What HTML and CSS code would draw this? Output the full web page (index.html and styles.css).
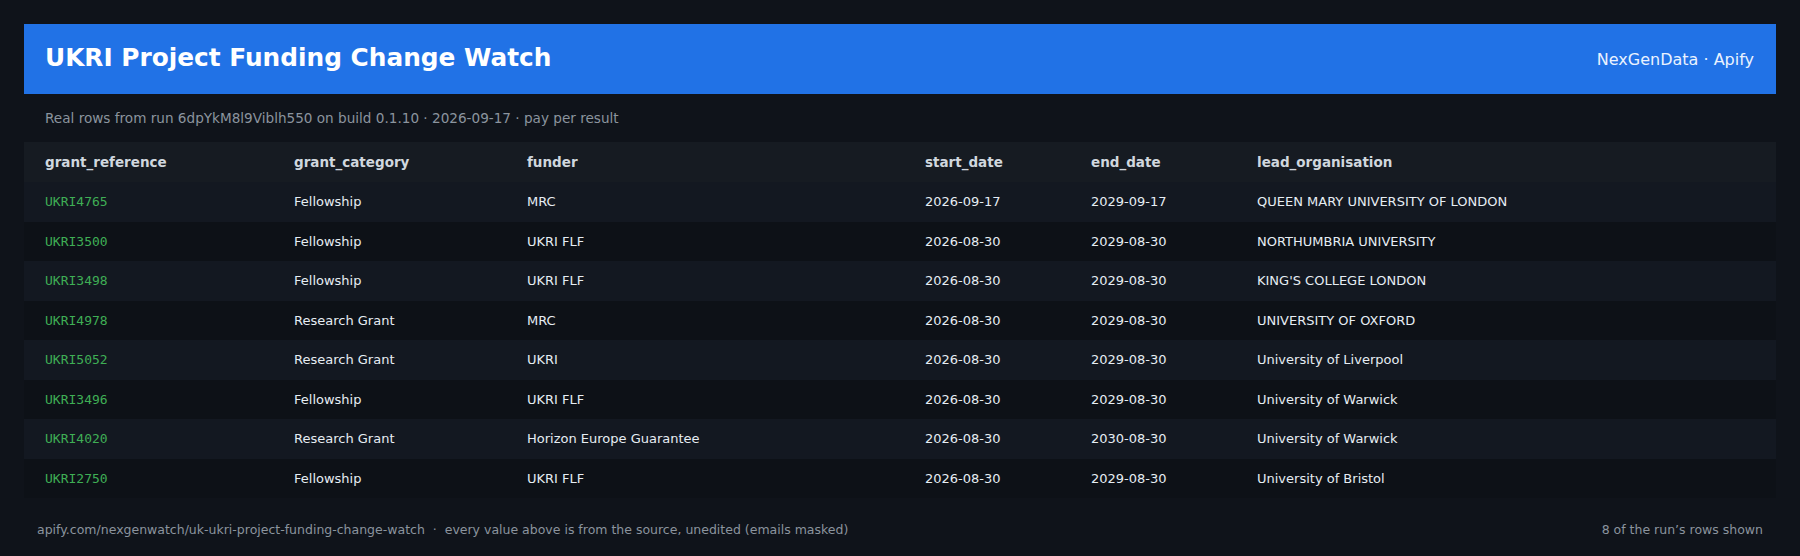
FILE: index.html
```html
<!DOCTYPE html>
<html lang="en">
<head>
<meta charset="utf-8">
<title>UKRI Project Funding Change Watch</title>
<link rel="stylesheet" href="styles.css">
</head>
<body>
<div class="page">
  <header class="banner">
    <h1 class="title">UKRI Project Funding Change Watch</h1>
    <div class="brand">NexGenData · Apify</div>
  </header>
  <p class="subtitle">Real rows from run 6dpYkM8l9Viblh550 on build 0.1.10 · 2026-09-17 · pay per result</p>
  <table class="grid">
    <colgroup>
      <col class="c1"><col class="c2"><col class="c3"><col class="c4"><col class="c5"><col class="c6">
    </colgroup>
    <thead>
      <tr><th>grant_reference</th><th>grant_category</th><th>funder</th><th>start_date</th><th>end_date</th><th>lead_organisation</th></tr>
    </thead>
    <tbody>
      <tr><td class="ref">UKRI4765</td><td>Fellowship</td><td>MRC</td><td>2026-09-17</td><td>2029-09-17</td><td>QUEEN MARY UNIVERSITY OF LONDON</td></tr>
      <tr><td class="ref">UKRI3500</td><td>Fellowship</td><td>UKRI FLF</td><td>2026-08-30</td><td>2029-08-30</td><td>NORTHUMBRIA UNIVERSITY</td></tr>
      <tr><td class="ref">UKRI3498</td><td>Fellowship</td><td>UKRI FLF</td><td>2026-08-30</td><td>2029-08-30</td><td>KING'S COLLEGE LONDON</td></tr>
      <tr><td class="ref">UKRI4978</td><td>Research Grant</td><td>MRC</td><td>2026-08-30</td><td>2029-08-30</td><td>UNIVERSITY OF OXFORD</td></tr>
      <tr><td class="ref">UKRI5052</td><td>Research Grant</td><td>UKRI</td><td>2026-08-30</td><td>2029-08-30</td><td>University of Liverpool</td></tr>
      <tr><td class="ref">UKRI3496</td><td>Fellowship</td><td>UKRI FLF</td><td>2026-08-30</td><td>2029-08-30</td><td>University of Warwick</td></tr>
      <tr><td class="ref">UKRI4020</td><td>Research Grant</td><td>Horizon Europe Guarantee</td><td>2026-08-30</td><td>2030-08-30</td><td>University of Warwick</td></tr>
      <tr><td class="ref">UKRI2750</td><td>Fellowship</td><td>UKRI FLF</td><td>2026-08-30</td><td>2029-08-30</td><td>University of Bristol</td></tr>
    </tbody>
  </table>
  <footer class="foot">
    <span>apify.com/nexgenwatch/uk-ukri-project-funding-change-watch &nbsp;·&nbsp; every value above is from the source, unedited (emails masked)</span>
    <span>8 of the run’s rows shown</span>
  </footer>
</div>
</body>
</html>
```

FILE: styles.css
```css
* { box-sizing: border-box; }
html, body {
  margin: 0;
  padding: 0;
  background: #0f131a;
  font-family: "DejaVu Sans", "Liberation Sans", sans-serif;
}
.page {
  width: 1800px;
  height: 556px;
  padding: 24px 24px 0;
  display: flex;
  flex-direction: column;
}
.banner {
  height: 70px;
  background: #2172e6;
  display: flex;
  align-items: center;
  justify-content: space-between;
  padding: 0 22px 0 21px;
}
.title {
  margin: 0;
  font-size: 24.8px;
  font-weight: bold;
  color: #ffffff;
  position: relative;
  top: -2px;
}
.brand {
  font-size: 16px;
  color: #eaf2ff;
}
.subtitle {
  margin: 0;
  height: 48px;
  display: flex;
  align-items: center;
  padding-left: 21px;
  font-size: 13.6px;
  color: #8b949e;
}
.grid {
  width: 1752px;
  border-collapse: collapse;
  table-layout: fixed;
}
.c1 { width: 249px; }
.c2 { width: 233px; }
.c3 { width: 398px; }
.c4 { width: 166px; }
.c5 { width: 166px; }
.c6 { width: 540px; }
.grid th, .grid td {
  text-align: left;
  padding: 12px 0 12px 21px;
  white-space: nowrap;
}
.grid th {
  background: #161b22;
  font-size: 13.5px;
  line-height: 16px;
  font-weight: bold;
  color: #d0d7de;
}
.grid td {
  font-size: 13px;
  line-height: 15.5px;
  color: #e6edf3;
}
.grid tbody tr:nth-child(odd) { background: #131821; }
.grid tbody tr:nth-child(even) { background: #0d1117; }
.grid td.ref {
  font-family: "DejaVu Sans Mono", "Liberation Mono", monospace;
  color: #3fae55;
}
.foot {
  flex: 1;
  display: flex;
  justify-content: space-between;
  align-items: center;
  padding: 0 13px;
  font-size: 12.5px;
  color: #8b949e;
  position: relative;
  top: 2px;
}
```
